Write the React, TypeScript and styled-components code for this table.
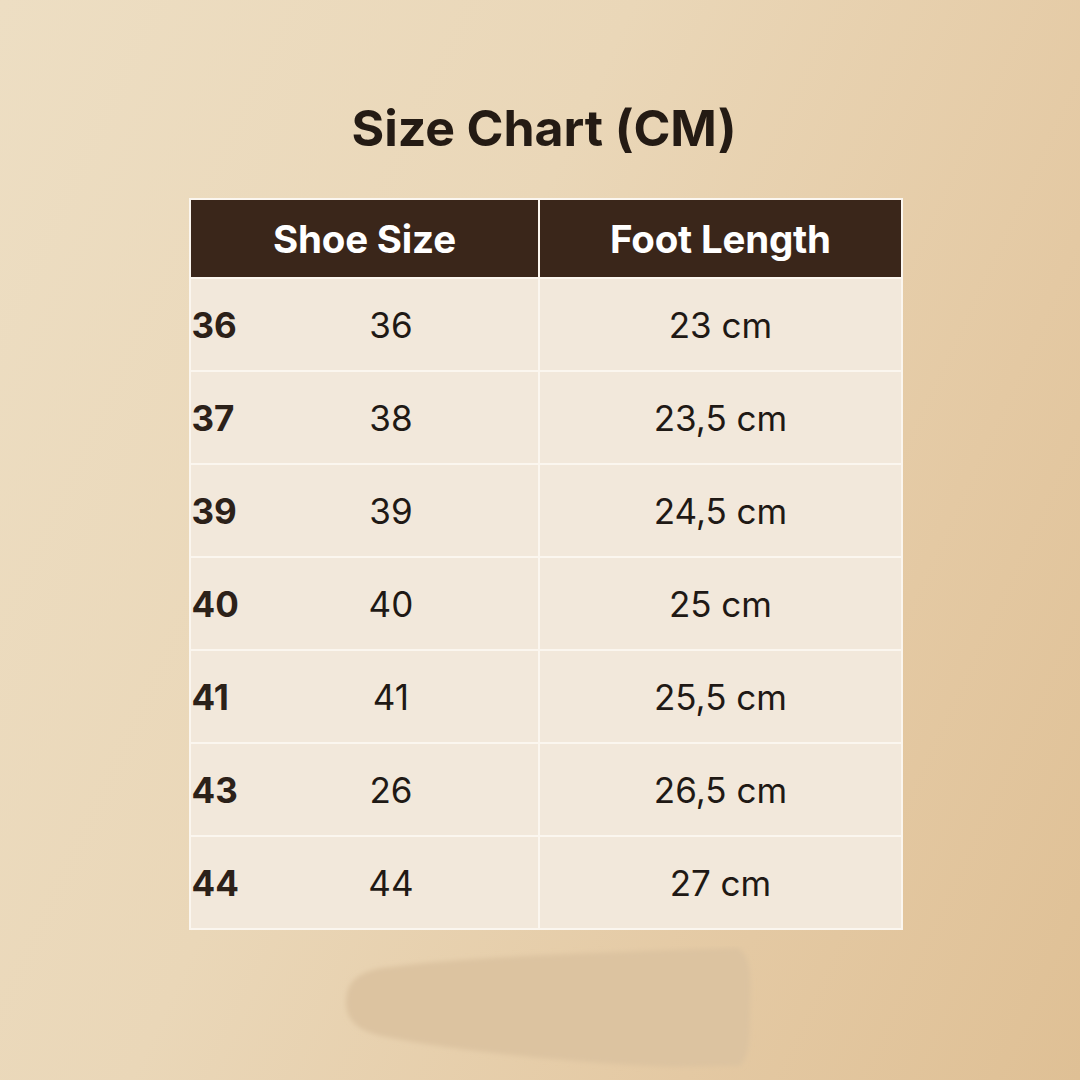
import styled, { createGlobalStyle } from 'styled-components';

const GlobalStyle = createGlobalStyle`
  html, body {
    margin: 0;
    padding: 0;
  }
  body {
    font-family: Inter, "Liberation Sans", Arial, sans-serif;
  }
`;

const Page = styled.div`
  width: 1080px;
  height: 1080px;
  overflow: hidden;
  display: flex;
  flex-direction: column;
  align-items: center;
  background: linear-gradient(115deg, #eddec3 0%, #ead7b8 40%, #e4c9a3 75%, #dfc095 100%);
`;

const Title = styled.h1`
  margin: 96px 0 0;
  font-size: 50px;
  line-height: 64px;
  font-weight: 700;
  color: #241b14;
  letter-spacing: -0.1px;
  transform: translateX(4px);
`;

const Table = styled.table`
  margin-top: 38px;
  margin-left: 11px;
  border-collapse: collapse;
  border: 2px solid #fbf6ef;
  width: 714px;
`;

const HeadCell = styled.th<{ $w: number }>`
  width: ${(p) => p.$w}px;
  height: 77px;
  padding: 0;
  background: #3a261a;
  border: 2px solid #fbf6ef;
  color: #ffffff;
  font-size: 38.5px;
  font-weight: 700;
  letter-spacing: -0.2px;
  text-align: center;
`;

const Cell = styled.td`
  height: 91px;
  padding: 0;
  background: #f2e8db;
  border: 2px solid #fbf6ef;
  color: #1f1915;
  font-size: 35px;
  font-weight: 400;
  text-align: center;
`;

const SizeCell = styled.div`
  display: flex;
  align-items: center;
`;

const EuLabel = styled.span`
  width: 44px;
  padding-left: 1px;
  font-weight: 700;
  color: #2c2119;
  text-align: left;
`;

const SizeValue = styled.span`
  flex: 1;
  text-align: center;
  padding-left: 8px;
`;

const ShadowArt = styled.svg`
  display: block;
  margin-top: 16px;
  margin-left: 24px;
  width: 420px;
  height: 126px;
`;

const rows = [
  { eu: '36', size: '36', length: '23 cm' },
  { eu: '37', size: '38', length: '23,5 cm' },
  { eu: '39', size: '39', length: '24,5 cm' },
  { eu: '40', size: '40', length: '25 cm' },
  { eu: '41', size: '41', length: '25,5 cm' },
  { eu: '43', size: '26', length: '26,5 cm' },
  { eu: '44', size: '44', length: '27 cm' },
];

export default function App() {
  return (
    <Page>
      <GlobalStyle />
      <Title>Size Chart (CM)</Title>
      <Table>
        <thead>
          <tr>
            <HeadCell $w={350}>Shoe Size</HeadCell>
            <HeadCell $w={362}>Foot Length</HeadCell>
          </tr>
        </thead>
        <tbody>
          {rows.map((r) => (
            <tr key={r.eu}>
              <Cell>
                <SizeCell>
                  <EuLabel>{r.eu}</EuLabel>
                  <SizeValue>{r.size}</SizeValue>
                </SizeCell>
              </Cell>
              <Cell>{r.length}</Cell>
            </tr>
          ))}
        </tbody>
      </Table>
      <ShadowArt viewBox="0 0 420 126">
        <defs>
          <filter id="soft" x="-10%" y="-20%" width="120%" height="140%">
            <feGaussianBlur stdDeviation="2.5" />
          </filter>
        </defs>
        <path
          d="M40 22 C110 12 220 8 330 4 L396 2 C408 8 410 30 408 60 C408 90 408 110 398 120 L330 121 C220 116 110 104 50 92 C10 86 4 70 4 56 C4 36 16 26 40 22 Z"
          fill="#dcc3a0"
          filter="url(#soft)"
        />
      </ShadowArt>
    </Page>
  );
}
